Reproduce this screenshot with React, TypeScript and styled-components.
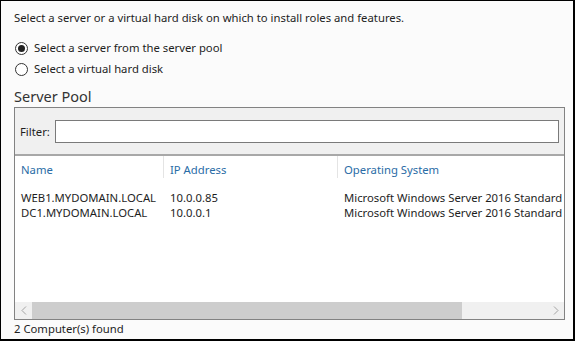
import * as React from 'react';
import styled, { createGlobalStyle } from 'styled-components';

const GlobalStyle = createGlobalStyle`
  html, body {
    margin: 0;
    padding: 0;
    background: #ffffff;
  }
  body {
    font-family: 'Noto Sans', 'Liberation Sans', sans-serif;
    font-size: 11.3px;
    color: #1e1e1e;
  }
`;

const servers = [
  { name: 'WEB1.MYDOMAIN.LOCAL', ip: '10.0.0.85', os: 'Microsoft Windows Server 2016 Standard' },
  { name: 'DC1.MYDOMAIN.LOCAL', ip: '10.0.0.1', os: 'Microsoft Windows Server 2016 Standard' },
];

const Frame = styled.div`
  box-sizing: border-box;
  width: 575px;
  height: 341px;
  border-style: solid;
  border-color: #000;
  border-width: 1px 2px 2px 1px;
  background: #fbfbfb;
  display: flex;
  flex-direction: column;
  padding: 9px 9px 0 13px;
  overflow: hidden;
`;

const Intro = styled.p`
  margin: 0;
  line-height: 16px;
`;

const RadioGroup = styled.div`
  display: flex;
  flex-direction: column;
  gap: 5px;
  margin-top: 14px;
`;

const RadioRow = styled.label`
  display: flex;
  align-items: center;
  gap: 6px;
  line-height: 16px;
`;

const RadioDot = styled.span<{ $checked?: boolean }>`
  box-sizing: border-box;
  width: 13px;
  height: 13px;
  border-radius: 50%;
  border: 1px solid #333;
  background: #fff;
  display: flex;
  align-items: center;
  justify-content: center;
  margin-left: 1px;

  &::after {
    content: '';
    display: ${({ $checked }) => ($checked ? 'block' : 'none')};
    width: 7px;
    height: 7px;
    border-radius: 50%;
    background: #222;
  }
`;

const Heading = styled.h2`
  margin: 10px 0 0;
  font-size: 14.5px;
  font-weight: normal;
  line-height: 19px;
  color: #333;
`;

const Panel = styled.section`
  box-sizing: border-box;
  width: 551px;
  height: 213px;
  border: 1px solid #828282;
  margin-top: 1px;
  display: flex;
  flex-direction: column;
  background: #fff;
`;

const FilterBar = styled.div`
  box-sizing: border-box;
  height: 48px;
  background: #f0f0f0;
  border-bottom: 2px solid #a8a8a8;
  display: flex;
  align-items: center;
  gap: 5px;
  padding: 0 5px 0 5px;
`;

const FilterInput = styled.input`
  box-sizing: border-box;
  flex: 1;
  height: 23px;
  border: 1px solid #7a7a7a;
  background: #fff;
  outline: none;
  font: inherit;
`;

const List = styled.div`
  flex: 1;
  overflow: hidden;
  display: flex;
  flex-direction: column;
`;

const Grid = styled.div`
  display: grid;
  grid-template-columns: 149px 174px 1fr;
  white-space: nowrap;
`;

const HeaderCell = styled.div<{ $divider?: boolean }>`
  height: 22px;
  padding: 6px 0 0 6px;
  color: #2a6ca6;
  border-right: ${({ $divider }) => ($divider ? '1px solid #e4e4e4' : 'none')};
  line-height: 16px;
  box-sizing: border-box;
  margin-bottom: 12px;
`;

const Cell = styled.div`
  padding-left: 6px;
  line-height: 15px;
  overflow: hidden;
`;

const Spacer = styled.div`
  flex: 1;
`;

const ScrollBar = styled.div`
  height: 17px;
  display: flex;
  background: #f0f0f0;
`;

const ScrollButton = styled.div`
  width: 17px;
  display: flex;
  align-items: center;
  justify-content: center;
  color: #a3a3a3;
`;

const Track = styled.div`
  flex: 1;
  display: flex;
`;

const Thumb = styled.div`
  width: 430px;
  background: #cdcdcd;
`;

const Footer = styled.div`
  margin-top: 1px;
  line-height: 16px;
`;

const Chevron = ({ dir }: { dir: 'left' | 'right' }) => (
  <svg width="6" height="9" viewBox="0 0 6 9">
    <path
      d={dir === 'left' ? 'M5 0.5 L1 4.5 L5 8.5' : 'M1 0.5 L5 4.5 L1 8.5'}
      fill="none"
      stroke="currentColor"
      strokeWidth="1"
    />
  </svg>
);

export default function App() {
  return (
    <>
      <GlobalStyle />
      <Frame>
        <Intro>Select a server or a virtual hard disk on which to install roles and features.</Intro>
        <RadioGroup>
          <RadioRow>
            <RadioDot $checked />
            Select a server from the server pool
          </RadioRow>
          <RadioRow>
            <RadioDot />
            Select a virtual hard disk
          </RadioRow>
        </RadioGroup>
        <Heading>Server Pool</Heading>
        <Panel>
          <FilterBar>
            <span>Filter:</span>
            <FilterInput />
          </FilterBar>
          <List>
            <Grid>
              <HeaderCell $divider>Name</HeaderCell>
              <HeaderCell $divider>IP Address</HeaderCell>
              <HeaderCell>Operating System</HeaderCell>
              {servers.map((s) => (
                <React.Fragment key={s.name}>
                  <Cell>{s.name}</Cell>
                  <Cell>{s.ip}</Cell>
                  <Cell>{s.os}</Cell>
                </React.Fragment>
              ))}
            </Grid>
            <Spacer />
            <ScrollBar>
              <ScrollButton>
                <Chevron dir="left" />
              </ScrollButton>
              <Track>
                <Thumb />
              </Track>
              <ScrollButton>
                <Chevron dir="right" />
              </ScrollButton>
            </ScrollBar>
          </List>
        </Panel>
        <Footer>2 Computer(s) found</Footer>
      </Frame>
    </>
  );
}
